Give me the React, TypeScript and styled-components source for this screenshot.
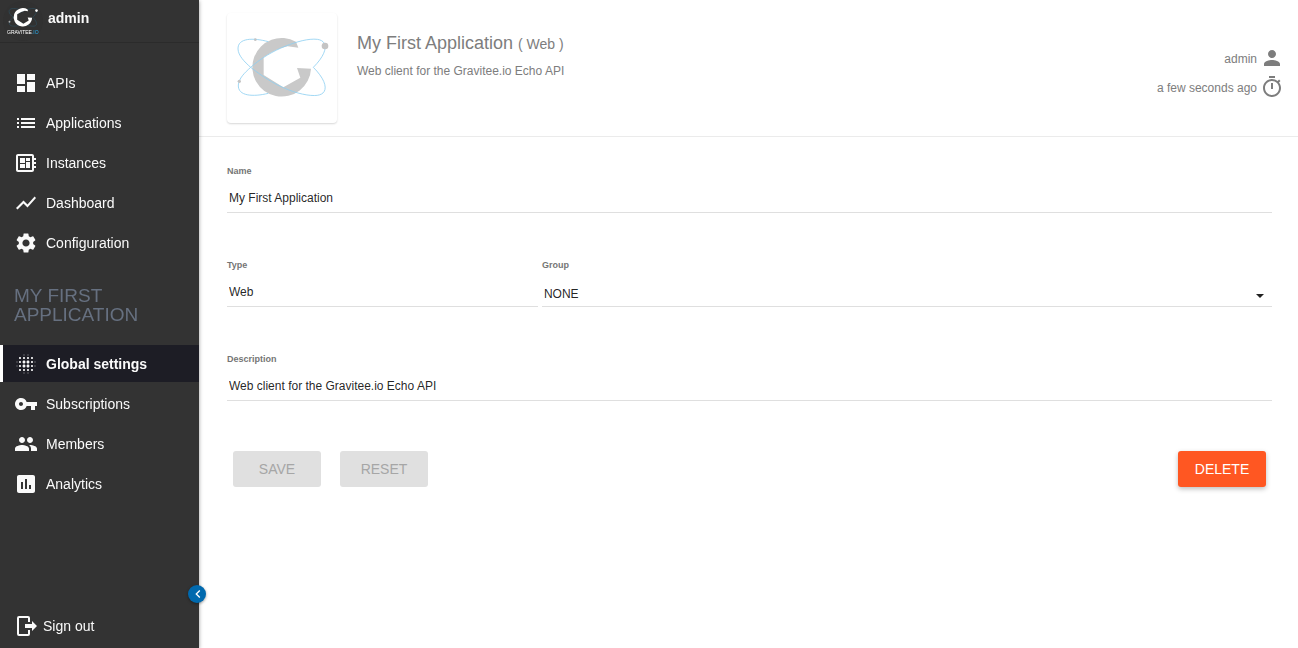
import React from 'react';
import styled, { createGlobalStyle } from 'styled-components';
import {
  MdDashboard, MdList, MdShowChart, MdSettings, MdBlurOn, MdVpnKey,
  MdPeople, MdAssessment, MdPerson, MdChevronLeft,
} from 'react-icons/md';

const GlobalStyle = createGlobalStyle`
  *, *::before, *::after { box-sizing: border-box; }
  body {
    margin: 0;
    background: #fff;
    font-family: "Liberation Sans", Arial, Helvetica, sans-serif;
    font-size: 12px;
    color: rgba(0, 0, 0, 0.87);
  }
  h1, h2, p, ul { margin: 0; padding: 0; font-weight: 400; }
  ul { list-style: none; }
  svg { display: block; flex: none; }
`;

const Page = styled.div`
  display: grid;
  grid-template-columns: 199px minmax(0, 1fr);
  min-height: 100vh;
`;

const Sidebar = styled.aside`
  position: relative;
  z-index: 1;
  display: flex;
  flex-direction: column;
  background: #333;
  color: #fafafa;
  box-shadow: 0 1px 4px rgba(0, 0, 0, 0.4);
  will-change: transform;
`;

const UserBar = styled.div`
  display: flex;
  align-items: center;
  gap: 5px;
  height: 43px;
  padding: 0 0 1px 3px;
  border-bottom: 1px solid #2b2b2b;
`;

const UserName = styled.span`
  padding-bottom: 6px;
  font-size: 14px;
  line-height: 20px;
  font-weight: 700;
`;

const MenuList = styled.ul`
  display: flex;
  flex-direction: column;
  gap: 3px;
`;

const MainMenu = styled.nav`
  padding-top: 21px;
`;

const MenuLink = styled.a<{ $active?: boolean }>`
  display: flex;
  align-items: center;
  gap: 8px;
  height: 37px;
  padding-left: 11px;
  border-left: 3px solid ${(p) => (p.$active ? '#fff' : 'transparent')};
  background: ${(p) => (p.$active ? '#1d1d25' : 'transparent')};
  color: #fafafa;
  font-size: 14px;
  line-height: 20px;
  font-weight: ${(p) => (p.$active ? 700 : 400)};
  text-decoration: none;
`;

const SectionTitle = styled.h2`
  padding: 25px 14px 21px;
  color: #667080;
  font-size: 19px;
  line-height: 19px;
  text-transform: uppercase;
`;

const SignOut = styled.a`
  display: flex;
  align-items: center;
  gap: 5px;
  margin-top: auto;
  padding: 0 0 10px 14px;
  color: #fafafa;
  font-size: 14px;
  line-height: 24px;
  text-decoration: none;
`;

const CollapseButton = styled.button`
  position: absolute;
  right: -7px;
  bottom: 45px;
  display: flex;
  align-items: center;
  justify-content: center;
  width: 18px;
  height: 18px;
  padding: 0 0 0 2px;
  border: 0;
  border-radius: 50%;
  background: #0069ae;
  color: #fff;
  box-shadow: 0 1px 3px rgba(0, 0, 0, 0.4);
`;

const AppHeader = styled.header`
  display: flex;
  gap: 20px;
  padding: 13px 14px 13px 28px;
  border-bottom: 1px solid #ebebeb;
  color: #7d7d7d;
`;

const LogoCard = styled.div`
  flex: none;
  width: 110px;
  height: 110px;
  border-radius: 4px;
  box-shadow: 0 1px 2px rgba(0, 0, 0, 0.16);
`;

const Heading = styled.div`
  flex: 1;
  padding-top: 18px;
`;

const Title = styled.h1`
  font-size: 18px;
  line-height: 24px;
`;

const TitleType = styled.small`
  font-size: 14px;
`;

const Summary = styled.p`
  padding-top: 7px;
  line-height: 16px;
`;

const MetaList = styled.ul`
  display: flex;
  flex-direction: column;
  gap: 5px;
  padding-top: 33px;
`;

const MetaItem = styled.li`
  display: flex;
  align-items: center;
  justify-content: flex-end;
  gap: 3px;
  height: 24px;
  line-height: 16px;
`;

const MetaText = styled.span`
  padding-top: 2px;
`;

const Form = styled.form`
  padding: 26px 26px 26px 28px;
`;

const Row = styled.div`
  display: grid;
  grid-template-columns: 23fr 54fr;
  gap: 4px;
`;

const Field = styled.div`
  position: relative;
  display: flex;
  flex-direction: column;
  gap: 8px;
  margin-bottom: 44px;
`;

const Label = styled.label`
  color: #757575;
  font-size: 9px;
  line-height: 16px;
  font-weight: 700;
`;

const controlStyle = `
  width: 100%;
  height: 26px;
  border: 0;
  border-bottom: 1px solid #dfdfdf;
  border-radius: 0;
  background: transparent;
  color: rgba(0, 0, 0, 0.87);
  font-family: inherit;
  font-size: 12px;
  outline: none;
`;

const Input = styled.input`
  ${controlStyle}
  padding: 0 2px 3px;
`;

const Select = styled.select`
  ${controlStyle}
  appearance: none;
  padding: 0 24px 0 2px;
`;

const Caret = styled.span`
  position: absolute;
  right: 8px;
  bottom: 9px;
  border: 4px solid transparent;
  border-top-color: #212121;
  border-bottom: 0;
  pointer-events: none;
`;

const Actions = styled.div`
  display: flex;
  gap: 19px;
  padding: 6px;
`;

const Button = styled.button<{ $warn?: boolean }>`
  width: 88px;
  height: 36px;
  padding: 0;
  border: 0;
  border-radius: 3px;
  background: ${(p) => (p.$warn ? '#ff5722' : '#e0e0e0')};
  color: ${(p) => (p.$warn ? '#fff' : '#a6a6a6')};
  font-family: inherit;
  font-size: 14px;
  text-transform: uppercase;
  margin-left: ${(p) => (p.$warn ? 'auto' : '0')};
  box-shadow: ${(p) => (p.$warn ? '0 2px 5px rgba(0, 0, 0, 0.26)' : 'none')};
`;

const gShape =
  'M213 50 A88 88 0 1 0 258 131 L216 129 L226 158 L175 187 L116 150 L116 97 Q155 70 188 64 L220 68 Z';
const orbitDown =
  'M130 50 C85 38 38 38 39 72 C40 92 58 110 77 127 C110 153 145 175 175 188 C215 206 255 214 277 211 C312 206 308 170 265 127';
const orbitUp =
  'M130 205 C85 216 38 214 40 180 C42 160 58 144 77 127 C110 98 145 78 180 64 C215 50 250 40 277 43 C312 48 308 84 265 127';

const GraviteeLogo = () => (
  <svg width="110" height="110" viewBox="6 -36 330 330" role="img" aria-label="Application logo">
    <path d={gShape} fill="#c9c9c9" />
    <g fill="none" stroke="#8fd0f2" strokeWidth="2.5">
      <path d={orbitDown} />
      <path d={orbitUp} />
    </g>
    <g fill="#c4c4c4">
      <circle cx="300" cy="63" r="10" />
      <circle cx="43" cy="169" r="5" />
      <circle cx="91" cy="44" r="4" />
    </g>
  </svg>
);

const Avatar = () => (
  <svg width="40" height="40" viewBox="0 0 40 40" role="img" aria-label="Gravitee.io">
    <circle cx="20" cy="20" r="20" fill="#313131" />
    <g transform="translate(2 3) scale(0.105)">
      <g fill="none" stroke="#2f4b58" strokeWidth="7">
        <path d={orbitDown} />
        <path d={orbitUp} />
      </g>
      <path d={gShape} fill="#fff" />
      <circle cx="300" cy="63" r="12" fill="#fff" />
      <circle cx="43" cy="169" r="9" fill="#aaa" />
    </g>
    <text x="4" y="33" fontSize="5" fill="#fff">
      GRAVITEE<tspan fill="#2baef0">.IO</tspan>
    </text>
  </svg>
);

const BoardIcon = () => (
  <svg width="24" height="24" viewBox="0 0 24 24" fill="currentColor" aria-hidden="true">
    <path d="M22 9V7h-2V5c0-1.100-.9-2-2-2H4c-1.100 0-2 .9-2 2v14c0 1.100.9 2 2 2h14c1.100 0 2-.9 2-2v-2h2v-2h-2v-2h2v-2h-2V9h2zm-4 10H4V5h14v14zM6 13h5v4H6zm6-6h4v3h-4zM6 7h5v5H6zm6 4h4v6h-4z" />
  </svg>
);

const ExitIcon = () => (
  <svg width="24" height="24" viewBox="0 0 24 24" fill="currentColor" aria-hidden="true">
    <path d="M5 2h9a2 2 0 0 1 2 2v4h-2V4H5v16h9v-4h2v4a2 2 0 0 1-2 2H5a2 2 0 0 1-2-2V4a2 2 0 0 1 2-2z" />
    <path d="M11 10h7V7l5 5-5 5v-3h-7z" />
  </svg>
);

const TimerIcon = () => (
  <svg width="24" height="24" viewBox="0 0 24 24" fill="currentColor" aria-hidden="true">
    <path d="M15 1H9v2h6V1zm-4 13h2V8h-2v6zm8.030-6.610l1.420-1.420c-.43-.51-.9-.99-1.410-1.410l-1.420 1.420C16.070 4.740 14.120 4 12 4c-4.970 0-9 4.030-9 9s4.020 9 9 9 9-4.030 9-9c0-2.120-.74-4.070-1.970-5.610zM12 20c-3.870 0-7-3.130-7-7s3.130-7 7-7 7 3.130 7 7-3.130 7-7 7z" />
  </svg>
);

const mainItems = [
  { label: 'APIs', icon: <MdDashboard size={24} /> },
  { label: 'Applications', icon: <MdList size={24} /> },
  { label: 'Instances', icon: <BoardIcon /> },
  { label: 'Dashboard', icon: <MdShowChart size={24} /> },
  { label: 'Configuration', icon: <MdSettings size={24} /> },
];

const appItems = [
  { label: 'Global settings', icon: <MdBlurOn size={24} />, active: true },
  { label: 'Subscriptions', icon: <MdVpnKey size={24} /> },
  { label: 'Members', icon: <MdPeople size={24} /> },
  { label: 'Analytics', icon: <MdAssessment size={24} /> },
];

type Item = { label: string; icon: React.ReactNode; active?: boolean };

const Menu = ({ items }: { items: Item[] }) => (
  <MenuList>
    {items.map((item) => (
      <li key={item.label}>
        <MenuLink href="#" $active={item.active}>
          {item.icon}
          {item.label}
        </MenuLink>
      </li>
    ))}
  </MenuList>
);

export default function App() {
  return (
    <>
      <GlobalStyle />
      <Page>
        <Sidebar>
          <UserBar>
            <Avatar />
            <UserName>admin</UserName>
          </UserBar>
          <MainMenu>
            <Menu items={mainItems} />
          </MainMenu>
          <SectionTitle>My First Application</SectionTitle>
          <nav>
            <Menu items={appItems} />
          </nav>
          <SignOut href="#">
            <ExitIcon />
            Sign out
          </SignOut>
          <CollapseButton type="button" aria-label="Collapse menu">
            <MdChevronLeft size={16} />
          </CollapseButton>
        </Sidebar>
        <main>
          <AppHeader>
            <LogoCard>
              <GraviteeLogo />
            </LogoCard>
            <Heading>
              <Title>
                My First Application <TitleType>( Web )</TitleType>
              </Title>
              <Summary>Web client for the Gravitee.io Echo API</Summary>
            </Heading>
            <MetaList>
              <MetaItem>
                <MetaText>admin</MetaText>
                <MdPerson size={24} />
              </MetaItem>
              <MetaItem>
                <MetaText>a few seconds ago</MetaText>
                <TimerIcon />
              </MetaItem>
            </MetaList>
          </AppHeader>
          <Form>
            <Field>
              <Label htmlFor="name">Name</Label>
              <Input id="name" defaultValue="My First Application" />
            </Field>
            <Row>
              <Field>
                <Label htmlFor="type">Type</Label>
                <Input id="type" defaultValue="Web" />
              </Field>
              <Field>
                <Label htmlFor="group">Group</Label>
                <Select id="group" defaultValue="NONE">
                  <option>NONE</option>
                </Select>
                <Caret />
              </Field>
            </Row>
            <Field>
              <Label htmlFor="description">Description</Label>
              <Input id="description" defaultValue="Web client for the Gravitee.io Echo API" />
            </Field>
            <Actions>
              <Button type="button" disabled>Save</Button>
              <Button type="button" disabled>Reset</Button>
              <Button type="button" $warn>Delete</Button>
            </Actions>
          </Form>
        </main>
      </Page>
    </>
  );
}
